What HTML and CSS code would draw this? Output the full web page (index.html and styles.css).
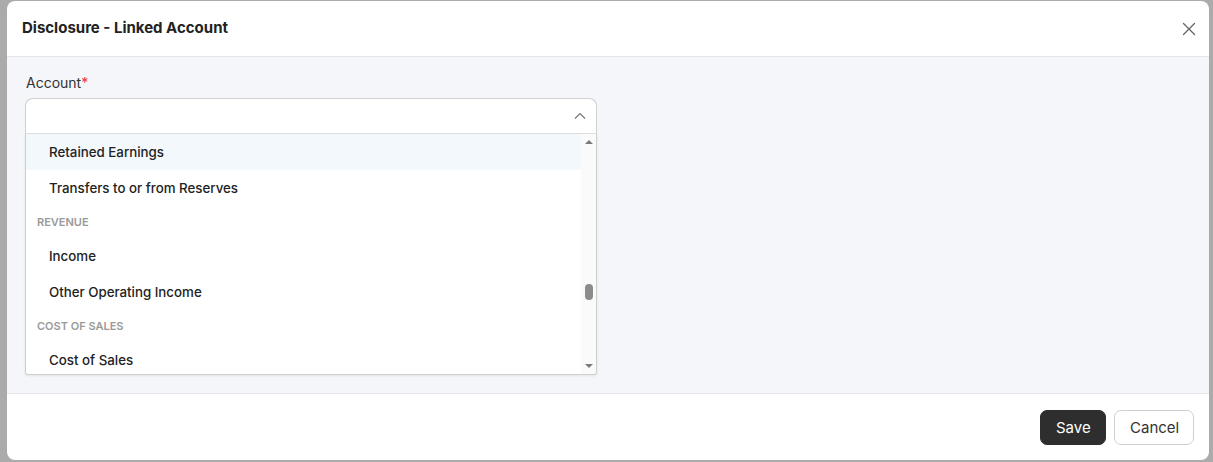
FILE: index.html
```html
<!DOCTYPE html>
<html>
<head>
<meta charset="utf-8">
<link rel="stylesheet" href="styles.css">
</head>
<body>
<div class="backdrop">
  <div class="modal">
    <div class="modal-header">
      <h1 class="modal-title">Disclosure - Linked Account</h1>
      <button class="close-btn" aria-label="Close">
        <svg width="14" height="14" viewBox="0 0 14 14"><path d="M1.5 1.5 L12.5 12.5 M12.5 1.5 L1.5 12.5" stroke="#666" stroke-width="1.3" fill="none" stroke-linecap="round"/></svg>
      </button>
    </div>
    <div class="modal-body">
      <label class="field-label">Account<span class="req">*</span></label>
      <div class="select">
        <div class="select-control">
          <svg class="chevron" width="12" height="8" viewBox="0 0 12 8"><path d="M1 6.5 L6 1.5 L11 6.5" stroke="#777" stroke-width="1.2" fill="none"/></svg>
        </div>
        <div class="menu">
          <ul class="options">
            <li class="option active">Retained Earnings</li>
            <li class="option">Transfers to or from Reserves</li>
            <li class="group">REVENUE</li>
            <li class="option">Income</li>
            <li class="option">Other Operating Income</li>
            <li class="group">COST OF SALES</li>
            <li class="option">Cost of Sales</li>
          </ul>
          <div class="scrollbar">
            <span class="arrow up"></span>
            <div class="track"><span class="thumb"></span></div>
            <span class="arrow down"></span>
          </div>
        </div>
      </div>
    </div>
    <div class="modal-footer">
      <button class="btn btn-primary">Save</button>
      <button class="btn btn-secondary">Cancel</button>
    </div>
  </div>
</div>
</body>
</html>
```
FILE: styles.css
```css
html, body {
  margin: 0;
  padding: 0;
  height: 100%;
}
body {
  background: #ababab;
  font-family: Inter, "Noto Sans", "Liberation Sans", sans-serif;
  color: #222;
  overflow: hidden;
}
.backdrop {
  display: flex;
  padding: 1px 4px 1px 7px;
  height: 459px;
}
.modal {
  flex: 1;
  background: #fff;
  border-radius: 8px;
  display: flex;
  flex-direction: column;
  overflow: hidden;
}
.modal-header {
  height: 55px;
  border-bottom: 1px solid #e3e5ea;
  display: flex;
  align-items: center;
  justify-content: space-between;
  padding: 0 12px 0 15px;
}
.modal-title {
  margin: 0 0 2px 0;
  font-size: 15px;
  font-weight: 700;
  color: #222;
}
.close-btn {
  border: 0;
  background: none;
  padding: 0;
  width: 16px;
  height: 16px;
  display: flex;
  align-items: center;
  justify-content: center;
  margin-top: 1px;
}
.modal-body {
  flex: 1;
  background: #f5f6fa;
  padding: 16px 18px 0 18px;
  display: flex;
  flex-direction: column;
  align-items: flex-start;
}
.field-label {
  font-size: 14px;
  line-height: 20px;
  color: #333;
  margin-bottom: 5px;
  padding-left: 1px;
}
.req {
  color: #e0343f;
}
.select {
  width: 572px;
}
.select-control {
  height: 34px;
  background: #fff;
  border: 1px solid #cfcfcf;
  border-bottom-color: #e0e0e0;
  border-radius: 8px 8px 0 0;
  display: flex;
  align-items: center;
  justify-content: flex-end;
  padding-right: 10px;
  box-sizing: content-box;
  width: 560px;
}
.menu {
  display: flex;
  height: 240px;
  background: #fff;
  border: 1px solid #cfcfcf;
  border-top: 0;
  border-radius: 0 0 3px 3px;
  box-shadow: 0 1px 3px rgba(0,0,0,0.08);
  overflow: hidden;
}
.options {
  list-style: none;
  margin: 0;
  padding: 0;
  flex: 1;
  overflow: hidden;
}
.option {
  height: 36px;
  line-height: 36px;
  padding-left: 23px;
  font-size: 13.3px;
  font-weight: 500;
  color: #222;
}
.option.active {
  background: #f3f8fd;
}
.group {
  height: 32px;
  line-height: 32px;
  padding-left: 11px;
  font-size: 11px;
  font-weight: 600;
  color: #9a9a9a;
}
.scrollbar {
  width: 15px;
  background: #fafafa;
  display: flex;
  flex-direction: column;
  align-items: center;
}
.arrow {
  width: 0;
  height: 0;
  border-left: 4px solid transparent;
  border-right: 4px solid transparent;
}
.arrow.up {
  border-bottom: 4px solid #7a7a7a;
  margin-top: 6px;
}
.arrow.down {
  border-top: 4px solid #7a7a7a;
  margin-bottom: 6px;
}
.track {
  flex: 1;
  display: flex;
  justify-content: center;
  padding-top: 140px;
}
.thumb {
  width: 8px;
  height: 16px;
  border-radius: 4px;
  background: #8b8b8b;
}
.modal-footer {
  border-top: 1px solid #e3e5ea;
  height: 66px;
  display: flex;
  align-items: center;
  justify-content: flex-end;
  gap: 8px;
  padding-right: 15px;
}
.btn {
  height: 35px;
  border-radius: 7px;
  font-family: Inter, "Noto Sans", "Liberation Sans", sans-serif;
  font-size: 15px;
  padding: 0 15px;
}
.btn-primary {
  background: #2e2e2e;
  color: #fff;
  border: 1px solid #2e2e2e;
  width: 66px;
}
.btn-secondary {
  background: #fff;
  color: #333;
  border: 1px solid #cfcfcf;
  width: 80px;
}
```
